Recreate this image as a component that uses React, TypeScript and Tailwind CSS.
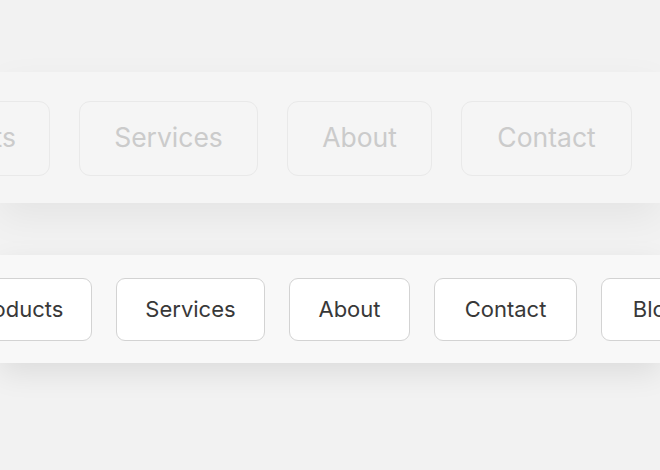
const items = [
  { label: "Products", w: "w-[150px]", wl: "w-[180px]" },
  { label: "Services", w: "w-[149px]", wl: "w-[179px]" },
  { label: "About", w: "w-[121px]", wl: "w-[145px]" },
  { label: "Contact", w: "w-[143px]", wl: "w-[171px]" },
  { label: "Blog", w: "w-[110px]", wl: "w-[132px]" },
]

const App = () => {
  return (
    <div
      className="h-[470px] w-[660px] overflow-hidden bg-[#f2f2f2]"
      style={{ fontFamily: "Inter, 'Liberation Sans', sans-serif" }}
    >
      {/* faded, enlarged copy */}
      <div className="mt-[72px] h-[131px] bg-[#f5f5f5] shadow-[0_14px_36px_rgba(0,0,0,0.06)] flex items-center">
        <div className="flex gap-[29px] ml-[-130px] shrink-0 pt-[1px]">
          {items.map((item) => (
            <div
              key={item.label}
              className={`${item.wl} h-[75px] shrink-0 flex items-center justify-center rounded-[11px] border border-[#e9e9e9] bg-[#f5f5f5] text-[26.5px] text-[#cbcbcb]`}
            >
              {item.label}
            </div>
          ))}
        </div>
      </div>

      {/* nav strip */}
      <div className="mt-[52px] h-[108px] bg-[#f8f8f8] shadow-[0_10px_28px_rgba(0,0,0,0.09)] flex items-center">
        <div className="flex gap-[24px] ml-[-58px] shrink-0">
          {items.map((item) => (
            <div
              key={item.label}
              className={`${item.w} h-[63px] shrink-0 flex items-center justify-center rounded-[9px] border border-[#d3d3d3] bg-white text-[22px] text-[#383838]`}
            >
              {item.label}
            </div>
          ))}
        </div>
      </div>
    </div>
  )
}

export default App
